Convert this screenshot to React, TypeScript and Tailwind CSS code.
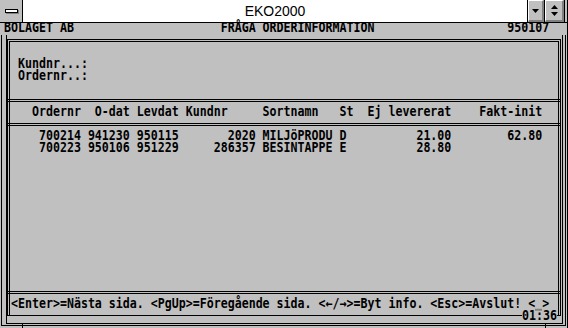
import React from 'react'

const dos = "font-['DejaVu_Sans_Mono',monospace] font-bold text-[11.626px] text-black whitespace-pre"

// text-mode line: each part is [column, text], 7px per column
const line = (parts: [number, string][], start = 0) => {
    let s = ''
    for (const [col, text] of parts) {
        s = s.padEnd(col - start, ' ') + text
    }
    return s
}

// DOS glyphs are tall and narrow, so stretch the mono font vertically
const TextRow = ({ children }: { children: React.ReactNode }) => (
    <div className="h-[12px]">
        <div className={`origin-top scale-y-[1.18] leading-[9px] ${dos}`}>{children}</div>
    </div>
)

const Separator = () => (
    <div className="h-[12px] pt-[4px]">
        <div className="-ml-[4px] -mr-[3px] border-t-[3px] border-double border-black" />
    </div>
)

const TitleBar = () => (
    <div className="flex h-[23px] border-b border-black">
        <div className="flex w-[23px] items-center justify-center border-r border-black">
            <div className="h-[4px] w-[13px] border border-black bg-white shadow-[1px_1px_0_#808080]" />
        </div>
        <div className="flex-1 bg-white pt-px text-center font-['Liberation_Sans',Arial,sans-serif] text-[14px] leading-[21px] text-black">
            EKO2000
        </div>
        <div className="flex border-l border-black">
            <div className="flex w-[16px] items-center justify-center border-t border-l border-r-2 border-b-2 border-t-white border-l-white border-r-[#808080] border-b-[#808080]">
                <svg width="7" height="4" viewBox="0 0 7 4">
                    <polygon points="0,0 7,0 3.5,4" fill="#000" />
                </svg>
            </div>
        </div>
        <div className="flex border-l border-black">
            <div className="flex w-[19px] items-center justify-center border-t border-l border-r-2 border-b-2 border-t-white border-l-white border-r-[#808080] border-b-[#808080]">
                <svg width="7" height="11" viewBox="0 0 7 11">
                    <polygon points="3.5,0 7,4 0,4" fill="#000" />
                    <polygon points="0,7 7,7 3.5,11" fill="#000" />
                </svg>
            </div>
        </div>
        <div className="w-[3px] border-l border-black" />
    </div>
)

export default function App() {
    return (
        <div className="relative flex h-[328px] w-[568px] flex-col overflow-hidden border-r border-black bg-[#c0c0c0]">
            <TitleBar />

            {/* row 0 */}
            <div className="pl-[4px]">
                <TextRow>{line([[0, 'BOLAGET AB'], [31, 'FRÅGA ORDERINFORMATION'], [72, '950107']])}</TextRow>
            </div>

            {/* frame */}
            <div className="mx-[1px] flex flex-col border-l border-r border-b border-black pl-[4px] pr-[2px] pb-px">
                <div className="flex flex-col border-l border-r border-b border-black pt-[4px] pr-px pb-[7px]">
                    <div className="flex flex-col border-[3px] border-b-0 border-double border-black pt-[5px] pl-px">
                        <div className="h-[12px]" />
                        <TextRow>{line([[2, 'Kundnr...:']], 1)}</TextRow>
                        <TextRow>{line([[2, 'Ordernr..:']], 1)}</TextRow>
                        <div className="h-[12px]" />
                        <Separator />
                        <TextRow>
                            {line([[4, 'Ordernr'], [13, 'O-dat'], [19, 'Levdat'], [26, 'Kundnr'], [37, 'Sortnamn'], [48, 'St'], [52, 'Ej levererat'], [68, 'Fakt-init']], 1)}
                        </TextRow>
                        <Separator />
                        <TextRow>
                            {line([[5, '700214'], [12, '941230'], [19, '950115'], [32, '2020'], [37, 'MILJöPRODU'], [48, 'D'], [59, '21.00'], [72, '62.80']], 1)}
                        </TextRow>
                        <TextRow>
                            {line([[5, '700223'], [12, '950106'], [19, '951229'], [30, '286357'], [37, 'BESINTAPPE'], [48, 'E'], [59, '28.80']], 1)}
                        </TextRow>
                        <div className="h-[132px]" />
                        <Separator />
                        <TextRow>
                            {line([[1, '<Enter>=Nästa sida.'], [21, '<PgUp>=Föregående sida.'], [45, '<←/→>=Byt info.'], [61, '<Esc>=Avslut!'], [75, '<']], 1)}
                            <span className="inline-block h-[10px] w-[7px] align-top shadow-[inset_0_-1.7px_0_#808080]" />
                            {'>'}
                        </TextRow>
                        <div className="-ml-[4px] -mr-[3px] mt-[4px] flex h-px items-center">
                            <div className="h-px flex-1 bg-black" />
                            <span className="h-[9px] w-[35px] bg-[#c0c0c0]">
                                <span className={`block origin-center scale-y-[1.18] leading-[9px] ${dos}`}>01:36</span>
                            </span>
                            <div className="h-px w-[4px] bg-black" />
                        </div>
                    </div>
                </div>
            </div>

            {/* frame corner notches */}
            <div className="absolute left-[22px] top-[323px] h-[5px] w-px bg-black" />
            <div className="absolute left-[545px] top-[323px] h-[5px] w-px bg-black" />
        </div>
    )
}
